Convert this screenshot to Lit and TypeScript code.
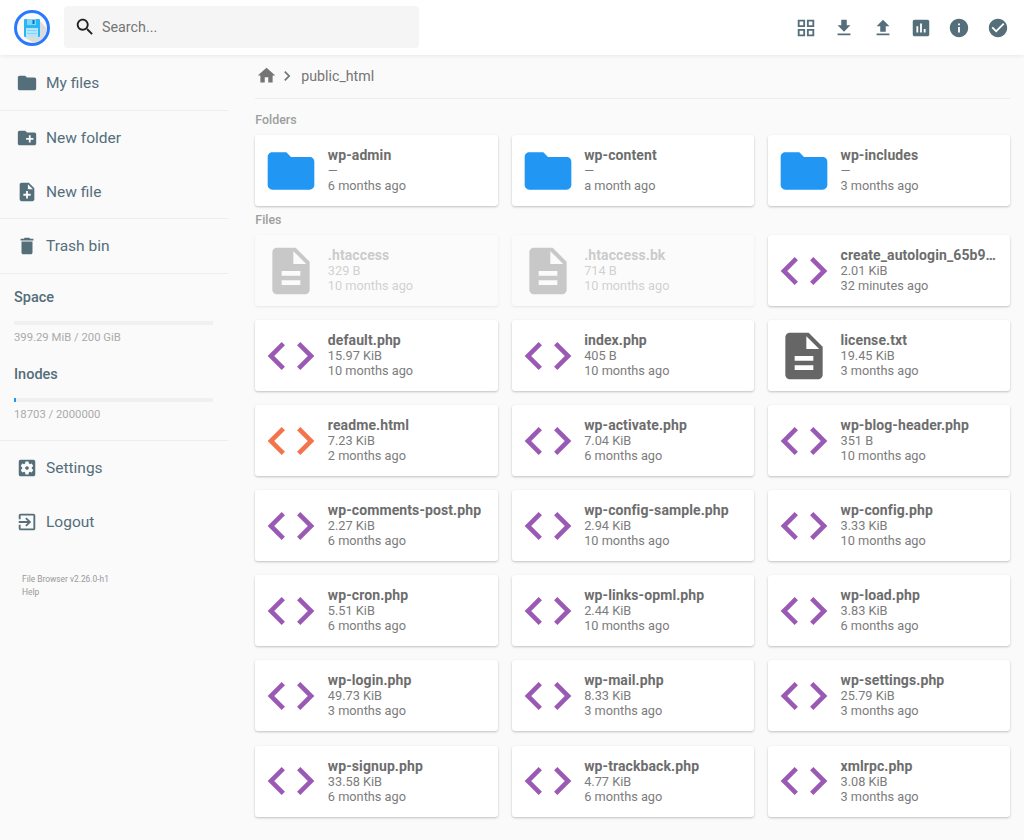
import { LitElement, html, css, svg } from "lit";
import { customElement } from "lit/decorators.js";

const P: Record<string, string> = {
  folder: "M10 4H4c-1.1 0-1.99.9-1.99 2L2 18c0 1.1.9 2 2 2h16c1.1 0 2-.9 2-2V8c0-1.1-.9-2-2-2h-8l-2-2z",
  newFolder: "M20 6h-8l-2-2H4c-1.11 0-1.99.89-1.99 2L2 18c0 1.11.89 2 2 2h16c1.11 0 2-.89 2-2V8c0-1.11-.89-2-2-2zm-1 8h-3v3h-2v-3h-3v-2h3V9h2v3h3v2z",
  newFile: "M14 2H6c-1.1 0-1.99.9-1.99 2L4 20c0 1.1.89 2 1.99 2H18c1.1 0 2-.9 2-2V8l-6-6zm2 14h-3v3h-2v-3H8v-2h3v-3h2v3h3v2zm-3-7V3.5L18.5 9H13z",
  trash: "M6 19c0 1.1.9 2 2 2h8c1.1 0 2-.9 2-2V7H6v12zM19 4h-3.5l-1-1h-5l-1 1H5v2h14V4z",
  settings: "M12 10c-1.1 0-2 .9-2 2s.9 2 2 2 2-.9 2-2-.9-2-2-2zm7-7H5c-1.11 0-2 .9-2 2v14c0 1.1.89 2 2 2h14c1.11 0 2-.9 2-2V5c0-1.1-.89-2-2-2zm-1.75 9c0 .23-.02.46-.05.68l1.48 1.16c.13.11.17.3.08.45l-1.4 2.42c-.09.15-.27.21-.43.15l-1.74-.7c-.36.28-.76.51-1.18.69l-.26 1.85c-.03.17-.18.3-.35.3h-2.8c-.17 0-.32-.13-.35-.29l-.26-1.85c-.43-.18-.82-.41-1.18-.69l-1.74.7c-.16.06-.34 0-.43-.15l-1.4-2.42c-.09-.15-.05-.34.08-.45l1.48-1.16c-.03-.23-.05-.46-.05-.69 0-.23.02-.46.05-.68l-1.48-1.16c-.13-.11-.17-.3-.08-.45l1.4-2.42c.09-.15.27-.21.43-.15l1.74.7c.36-.28.76-.51 1.18-.69l.26-1.85c.03-.17.18-.3.35-.3h2.8c.17 0 .32.13.35.29l.26 1.85c.43.18.82.41 1.18.69l1.74-.7c.16-.06.34 0 .43.15l1.4 2.42c.09.15.05.34-.08.45l-1.48 1.16c.03.23.05.46.05.69z",
  logout: "M10.09 15.59L11.5 17l5-5-5-5-1.41 1.41L12.67 11H3v2h9.67l-2.58 2.59zM19 3H5c-1.11 0-2 .9-2 2v4h2V5h14v14H5v-4H3v4c0 1.1.89 2 2 2h14c1.1 0 2-.9 2-2V5c0-1.1-.9-2-2-2z",
  search: "M15.5 14h-.79l-.28-.27C15.41 12.59 16 11.11 16 9.5 16 5.91 13.09 3 9.5 3S3 5.91 3 9.5 5.91 16 9.5 16c1.61 0 3.09-.59 4.23-1.57l.27.28v.79l5 4.99L20.49 19l-4.99-5zm-6 0C7.01 14 5 11.99 5 9.5S7.01 5 9.5 5 14 7.01 14 9.5 11.99 14 9.5 14z",
  grid: "M3 3v8h8V3H3zm6 6H5V5h4v4zm-6 4v8h8v-8H3zm6 6H5v-4h4v4zm4-16v8h8V3h-8zm6 6h-4V5h4v4zm-6 4v8h8v-8h-8zm6 6h-4v-4h4v4z",
  download: "M19 9h-4V3H9v6H5l7 7 7-7zM5 18v2h14v-2H5z",
  upload: "M9 16h6v-6h4l-7-7-7 7h4zm-4 2h14v2H5z",
  chart: "M19 3H5c-1.1 0-2 .9-2 2v14c0 1.1.9 2 2 2h14c1.1 0 2-.9 2-2V5c0-1.1-.9-2-2-2zM9 17H7v-7h2v7zm4 0h-2V7h2v10zm4 0h-2v-4h2v4z",
  info: "M12 2C6.48 2 2 6.48 2 12s4.48 10 10 10 10-4.48 10-10S17.52 2 12 2zm1 15h-2v-6h2v6zm0-8h-2V7h2v2z",
  check: "M12 2C6.48 2 2 6.48 2 12s4.48 10 10 10 10-4.48 10-10S17.52 2 12 2zm-2 15l-5-5 1.41-1.41L10 14.17l7.59-7.59L19 8l-9 9z",
  home: "M10 20v-6h4v6h5v-8h3L12 3 2 12h3v8z",
  chevron: "M10 6L8.59 7.41 13.17 12l-4.58 4.59L10 18l6-6z",
  doc: "M14 2H6c-1.1 0-1.99.9-1.99 2L4 20c0 1.1.89 2 1.99 2H18c1.1 0 2-.9 2-2V8l-6-6zm2 16H8v-2h8v2zm0-4H8v-2h8v2zm-3-5V3.5L18.5 9H13z",
  code: "M9.4 16.6L4.8 12l4.6-4.6L8 6l-6 6 6 6 1.4-1.4zm5.2 0l4.6-4.6-4.6-4.6L16 6l6 6-6 6-1.4-1.4z",
};

const icon = (name: string, cls = "") =>
  html`<svg class="ic ${cls}" viewBox="0 0 24 24" fill="currentColor"><path d=${P[name]}></path></svg>`;

type Item = { n: string; s: string; m: string; k: "folder" | "php" | "html" | "txt"; hidden?: boolean };

const folders: Item[] = [
  { n: "wp-admin", s: "—", m: "6 months ago", k: "folder" },
  { n: "wp-content", s: "—", m: "a month ago", k: "folder" },
  { n: "wp-includes", s: "—", m: "3 months ago", k: "folder" },
];

const files: Item[] = [
  { n: ".htaccess", s: "329 B", m: "10 months ago", k: "txt", hidden: true },
  { n: ".htaccess.bk", s: "714 B", m: "10 months ago", k: "txt", hidden: true },
  { n: "create_autologin_65b9…", s: "2.01 KiB", m: "32 minutes ago", k: "php" },
  { n: "default.php", s: "15.97 KiB", m: "10 months ago", k: "php" },
  { n: "index.php", s: "405 B", m: "10 months ago", k: "php" },
  { n: "license.txt", s: "19.45 KiB", m: "3 months ago", k: "txt" },
  { n: "readme.html", s: "7.23 KiB", m: "2 months ago", k: "html" },
  { n: "wp-activate.php", s: "7.04 KiB", m: "6 months ago", k: "php" },
  { n: "wp-blog-header.php", s: "351 B", m: "10 months ago", k: "php" },
  { n: "wp-comments-post.php", s: "2.27 KiB", m: "6 months ago", k: "php" },
  { n: "wp-config-sample.php", s: "2.94 KiB", m: "10 months ago", k: "php" },
  { n: "wp-config.php", s: "3.33 KiB", m: "10 months ago", k: "php" },
  { n: "wp-cron.php", s: "5.51 KiB", m: "6 months ago", k: "php" },
  { n: "wp-links-opml.php", s: "2.44 KiB", m: "10 months ago", k: "php" },
  { n: "wp-load.php", s: "3.83 KiB", m: "6 months ago", k: "php" },
  { n: "wp-login.php", s: "49.73 KiB", m: "3 months ago", k: "php" },
  { n: "wp-mail.php", s: "8.33 KiB", m: "3 months ago", k: "php" },
  { n: "wp-settings.php", s: "25.79 KiB", m: "3 months ago", k: "php" },
  { n: "wp-signup.php", s: "33.58 KiB", m: "6 months ago", k: "php" },
  { n: "wp-trackback.php", s: "4.77 KiB", m: "6 months ago", k: "php" },
  { n: "xmlrpc.php", s: "3.08 KiB", m: "3 months ago", k: "php" },
];

const kindIcon = { folder: "folder", php: "code", html: "code", txt: "doc" } as const;

const logo = svg`
  <svg class="logo" viewBox="0 0 36 36">
    <circle cx="18" cy="18" r="16.5" fill="#fafafa" stroke="#2979ff" stroke-width="3"></circle>
    <path d="M24 9l8.5 9A15 15 0 0 1 20 33L10 27z" fill="#dcdcdc"></path>
    <rect x="10" y="9" width="16" height="18" rx="1.2" fill="#29b6f6"></rect>
    <rect x="13" y="9" width="9" height="6" fill="#81d4fa"></rect>
    <rect x="18.5" y="10" width="2" height="4" fill="#0277bd"></rect>
    <rect x="12" y="18" width="12" height="9" fill="#b3e5fc"></rect>
    <rect x="13" y="20" width="10" height="1" fill="#81d4fa"></rect>
    <rect x="13" y="23" width="10" height="1" fill="#81d4fa"></rect>
  </svg>`;

@customElement("app-root")
export class AppRoot extends LitElement {
  static styles = css`
    :host {
      display: block;
      min-height: 840px;
      background: #fafafa;
      font-family: Roboto, "Liberation Sans", sans-serif;
      color: #546e7a;
    }
    .ic { display: block; width: 22px; height: 22px; flex: none; }

    header {
      height: 55px;
      background: #fff;
      box-shadow: 0 0 5px rgba(0, 0, 0, 0.1);
      display: flex;
      align-items: center;
      padding: 0 7px 0 14px;
      position: relative;
    }
    .logo { width: 36px; height: 36px; flex: none; }
    .search {
      margin: 0 0 1px 14px;
      width: 355px;
      height: 42px;
      background: #f5f5f5;
      border-radius: 4px;
      display: flex;
      align-items: center;
      padding-left: 10px;
      box-sizing: border-box;
      color: #757575;
      font-size: 14.3px;
    }
    .search .ic { color: #212121; margin-right: 6px; }
    .tools { margin-left: auto; display: flex; }
    .tools span { width: 38.4px; display: flex; justify-content: center; }

    .body { display: grid; grid-template-columns: 228px 1fr; }

    nav { display: flex; flex-direction: column; padding-top: 1px; }
    .item {
      height: 54px;
      display: flex;
      align-items: center;
      padding-left: 16px;
      font-size: 15.5px;
      gap: 8px;
    }
    .item.short { height: 53px; }
    .rule { height: 1px; background: rgba(0, 0, 0, 0.05); }
    .usage { padding: 14px 14px 18px; }
    .usage h4 { margin: 0; font-size: 14.5px; font-weight: 500; line-height: 20px; }
    .bar { height: 4px; background: #f0f0f0; margin-top: 13px; width: 199px; }
    .bar i { display: block; height: 100%; background: #2196f3; }
    .usage p { margin: 6px 0 20px; font-size: 11.3px; line-height: 14px; color: #aaa; }
    .usage section:last-child p { margin-bottom: 0; }
    .credits { margin: 24px 0 0 22px; font-size: 8.4px; line-height: 13px; color: #999; }

    main { padding: 0 13.67px 24px 27.33px; min-width: 0; }
    .crumbs {
      height: 41px;
      padding-bottom: 2px;
      display: flex;
      align-items: center;
      border-bottom: 1px solid rgba(0, 0, 0, 0.05);
      color: #757575;
      font-size: 14.2px;
    }
    .crumbs .home { width: 21px; height: 21px; margin-left: 1px; }
    .crumbs .chev { width: 20px; height: 20px; margin: 0 4px 0 0; }
    h2 { margin: 0; font-size: 12.4px; font-weight: 500; color: #9e9e9e; line-height: 14px; }
    .lbl1 { margin-top: 14px; margin-bottom: 8px; }
    .lbl2 { margin-top: 7px; margin-bottom: 8px; }
    .grid { display: grid; grid-template-columns: repeat(3, minmax(0, 1fr)); gap: 14.1px 14px; }
    .card {
      height: 71px;
      background: #fff;
      border-radius: 3px;
      box-shadow: 0 1px 3px rgba(0, 0, 0, 0.12), 0 1px 2px rgba(0, 0, 0, 0.12);
      display: flex;
      align-items: center;
      padding-left: 8px;
      min-width: 0;
      font-size: 12.75px;
      line-height: 15px;
      color: #7c7c7c;
    }
    .card .ic { width: 56px; height: 56px; margin-right: 8.5px; }
    .card .t { min-width: 0; flex: 1; }
    .card b {
      display: block;
      font-size: 14px;
      letter-spacing: 0.1px;
      font-weight: 700;
      color: #6d6d6d;
      white-space: nowrap;
    }
    .card span { display: block; }
    .card.hidden { opacity: 0.33; }
    .k-folder { color: #2196f3; }
    .k-php { color: #9b59b6; }
    .k-html { color: #f4734a; }
    .k-txt { color: #666; }
  `;

  private card(i: Item) {
    return html`<div class="card ${i.hidden ? "hidden" : ""}">
      ${icon(kindIcon[i.k], "k-" + i.k)}
      <div class="t"><b>${i.n}</b><span>${i.s}</span><span>${i.m}</span></div>
    </div>`;
  }

  render() {
    return html`
      <header>
        ${logo}
        <div class="search">${icon("search")}Search...</div>
        <div class="tools">
          ${["grid", "download", "upload", "chart", "info", "check"].map((n) => html`<span>${icon(n)}</span>`)}
        </div>
      </header>
      <div class="body">
        <nav>
          <div class="item">${icon("folder")}My files</div>
          <div class="rule"></div>
          <div class="item">${icon("newFolder")}New folder</div>
          <div class="item short">${icon("newFile")}New file</div>
          <div class="rule"></div>
          <div class="item">${icon("trash")}Trash bin</div>
          <div class="rule"></div>
          <div class="usage">
            <section>
              <h4>Space</h4>
              <div class="bar"></div>
              <p>399.29 MiB / 200 GiB</p>
            </section>
            <section>
              <h4>Inodes</h4>
              <div class="bar"><i style="width:0.94%"></i></div>
              <p>18703 / 2000000</p>
            </section>
          </div>
          <div class="rule"></div>
          <div class="item">${icon("settings")}Settings</div>
          <div class="item">${icon("logout")}Logout</div>
          <div class="credits">File Browser v2.26.0-h1<br />Help</div>
        </nav>
        <main>
          <div class="crumbs">
            ${icon("home", "home")}${icon("chevron", "chev")}public_html
          </div>
          <h2 class="lbl1">Folders</h2>
          <div class="grid">${folders.map((f) => this.card(f))}</div>
          <h2 class="lbl2">Files</h2>
          <div class="grid">${files.map((f) => this.card(f))}</div>
        </main>
      </div>
    `;
  }
}
